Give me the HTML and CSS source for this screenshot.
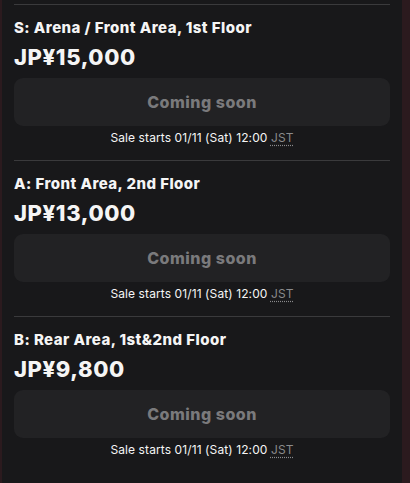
FILE: index.html
```html
<!DOCTYPE html>
<html lang="en">
<head>
  <meta charset="UTF-8" />
  <meta name="viewport" content="width=device-width, initial-scale=1.0"/>
  <title>Tickets</title>
  <link rel="stylesheet" href="styles.css">
</head>
<body>

  <div class="card">

    <div class="ticket">
      <h3 class="ticket-name">S: Arena / Front Area, 1st Floor</h3>
      <div class="price">JP¥15,000</div>
      <button class="buy" disabled>Coming soon</button>
      <p class="sale">Sale starts 01/11 (Sat) 12:00 <abbr title="Japan Standard Time">JST</abbr></p>
    </div>

    <div class="ticket">
      <h3 class="ticket-name">A: Front Area, 2nd Floor</h3>
      <div class="price">JP¥13,000</div>
      <button class="buy" disabled>Coming soon</button>
      <p class="sale">Sale starts 01/11 (Sat) 12:00 <abbr title="Japan Standard Time">JST</abbr></p>
    </div>

    <div class="ticket">
      <h3 class="ticket-name">B: Rear Area, 1st&amp;2nd Floor</h3>
      <div class="price">JP¥9,800</div>
      <button class="buy" disabled>Coming soon</button>
      <p class="sale">Sale starts 01/11 (Sat) 12:00 <abbr title="Japan Standard Time">JST</abbr></p>
    </div>

  </div>

</body>
</html>
```

FILE: styles.css
```css
:root {
  --page-bg: #2b1a1e;
  --card-bg: #18181a;
  --btn-bg: #222224;
  --line: #3a3a3c;
  --text: #f5f5f5;
  --muted: #7a7a7c;
}

body {
  margin: 0;
  font-family: Inter, 'Noto Sans', sans-serif;
  background-color: var(--page-bg);
  color: var(--text);
}

.card {
  width: 376px;
  margin-left: 2px;
  padding: 4px 12px 22px;
  background-color: var(--card-bg);
  border-radius: 0 0 14px 14px;
}

.ticket {
  border-top: 1px solid var(--line);
  padding: 12px 0 13px;
}

.ticket-name {
  margin: 0;
  font-size: 15px;
  line-height: 22px;
  font-weight: 800;
  letter-spacing: 0.45px;
}

.price {
  font-size: 22px;
  line-height: 30px;
  font-weight: 800;
  letter-spacing: 0.6px;
  margin-top: 3px;
}

.buy {
  display: block;
  width: 100%;
  height: 48px;
  margin-top: 6px;
  border: none;
  border-radius: 9px;
  background-color: var(--btn-bg);
  color: var(--muted);
  font-family: inherit;
  font-size: 16px;
  font-weight: 800;
  letter-spacing: 0.5px;
  cursor: not-allowed;
}

.sale {
  margin: 3px 0 0;
  text-align: center;
  font-size: 12px;
  line-height: 18px;
  letter-spacing: 0.1px;
}

.sale abbr {
  color: #8a8a8c;
  text-decoration: underline dotted;
  text-underline-offset: 3px;
}
```
